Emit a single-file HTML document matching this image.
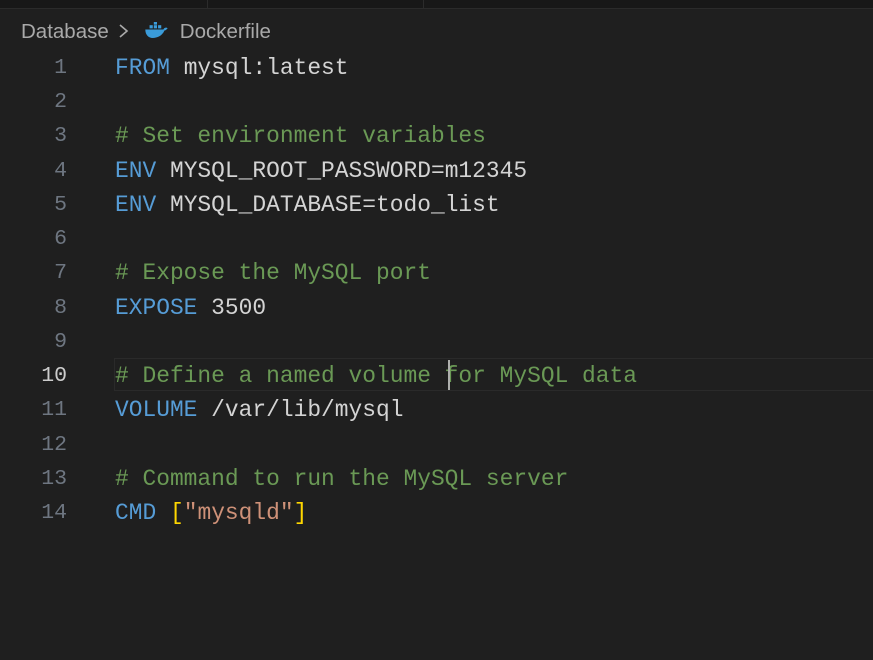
<!DOCTYPE html>
<html><head><style>
body{margin:0;width:873px;height:660px;background:#1f1f1f;overflow:hidden;position:relative;font-family:"Liberation Sans",sans-serif}
.tabs{position:absolute;left:0;top:0;width:873px;height:8px;background:#181818;border-bottom:1px solid #2b2b2b}
.sep{position:absolute;top:0;width:1px;height:8px;background:#2b2b2b}
.bc{position:absolute;left:21px;top:20px;font-size:20.5px;color:#a9a9a9;white-space:nowrap}
.ln{position:absolute;left:0;width:67px;text-align:right;color:#6e7681;font-family:"Liberation Mono",monospace;font-size:21.5px}
.code{position:absolute;left:115px;font-family:"Liberation Mono",monospace;font-size:22.9px;color:#d4d4d4;white-space:pre}
.k{color:#569cd6}.c{color:#6a9955}.s{color:#ce9178}.b{color:#ffd700}
.hl{position:absolute;left:114px;top:358px;width:760px;height:33px;border:1px solid #2a2a2a;box-sizing:border-box}
.cur{position:absolute;left:448px;top:360px;width:2px;height:30px;background:#aeafad}
</style></head><body>
<div class="tabs"></div><div class="sep" style="left:207px"></div><div class="sep" style="left:423px"></div>
<div class="bc">Database<svg width="14" height="18" viewBox="0 0 14 18" style="vertical-align:-2px;margin-left:8px"><path d="M3 3l7 6-7 6" fill="none" stroke="#a9a9a9" stroke-width="1.6"/></svg><svg width="26" height="17" viewBox="0 0 24 16" style="vertical-align:-1px;margin:0 10px 0 13px"><path d="M1 7h17c1-2 3-2 4-1-1 1-2 2-3 2-2 5-7 7-11 7-4 0-7-3-7-8z" fill="#3a9bd9"/><rect x="5" y="3" width="3" height="3" fill="#3a9bd9"/><rect x="9" y="3" width="3" height="3" fill="#3a9bd9"/><rect x="9" y="0" width="3" height="2.5" fill="#3a9bd9"/><rect x="13" y="3" width="3" height="3" fill="#3a9bd9"/></svg>Dockerfile</div>
<div class="hl"></div>
<div id="lines"></div>
<div class="cur"></div>
<script>
var L=[
'<span class="k">FROM</span> mysql:latest','',
'<span class="c"># Set environment variables</span>',
'<span class="k">ENV</span> MYSQL_ROOT_PASSWORD=m12345',
'<span class="k">ENV</span> MYSQL_DATABASE=todo_list','',
'<span class="c"># Expose the MySQL port</span>',
'<span class="k">EXPOSE</span> 3500','',
'<span class="c"># Define a named volume for MySQL data</span>',
'<span class="k">VOLUME</span> /var/lib/mysql','',
'<span class="c"># Command to run the MySQL server</span>',
'<span class="k">CMD</span> <span class="b">[</span><span class="s">"mysqld"</span><span class="b">]</span>'];
var h='';
for(var i=0;i<L.length;i++){var t=55+i*34.23;
h+='<div class="ln" style="top:'+(t+1)+'px;'+(i==9?'color:#cccccc':'')+'">'+(i+1)+'</div>';
h+='<div class="code" style="top:'+t+'px">'+L[i]+'</div>';}
document.getElementById('lines').innerHTML=h;
</script>
</body></html>
